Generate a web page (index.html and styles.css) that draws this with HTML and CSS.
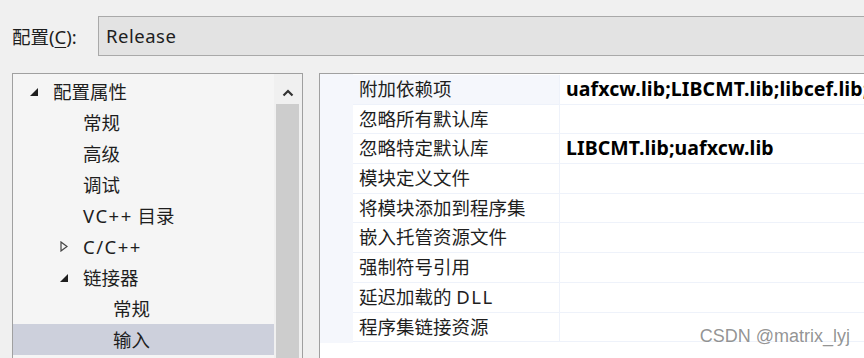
FILE: index.html
```html
<!DOCTYPE html>
<html lang="zh-CN">
<head>
<meta charset="UTF-8">
<meta name="viewport" content="width=device-width, initial-scale=1.0">
<title>属性页</title>
<link rel="stylesheet" href="styles.css">
</head>
<body>
<div class="page">
  <div class="config-bar">
    <label class="config-label">配置(<u>C</u>):</label>
    <div class="combo">Release</div>
  </div>

  <div class="main">
    <div class="tree-panel">
      <ul class="tree">
        <li class="node lvl0">
          <svg class="arrow" width="8" height="8" viewBox="0 0 8 8"><polygon points="8,0 8,8 0,8" fill="#1e1e1e"/></svg>
          配置属性
        </li>
        <li class="node lvl1">常规</li>
        <li class="node lvl1">高级</li>
        <li class="node lvl1">调试</li>
        <li class="node lvl1"><span class="latin">VC++</span> 目录</li>
        <li class="node lvl1">
          <svg class="arrow closed" width="8" height="11" viewBox="0 0 8 11"><polygon points="1,1 7,5.5 1,10" fill="none" stroke="#444" stroke-width="1.2"/></svg>
          <span class="latin">C/C++</span>
        </li>
        <li class="node lvl1">
          <svg class="arrow" width="8" height="8" viewBox="0 0 8 8"><polygon points="8,0 8,8 0,8" fill="#1e1e1e"/></svg>
          链接器
        </li>
        <li class="node lvl2">常规</li>
        <li class="node lvl2 selected">输入</li>
      </ul>
      <div class="scrollbar">
        <svg class="scroll-up" width="12" height="8" viewBox="0 0 12 8"><polyline points="1.5,6.5 6,2 10.5,6.5" fill="none" stroke="#333" stroke-width="2.2"/></svg>
        <div class="thumb"></div>
      </div>
    </div>

    <div class="grid-panel">
      <div class="gutter"></div>
      <div class="props">
        <div class="row first"><div class="name">附加依赖项</div><div class="value">uafxcw.lib;LIBCMT.lib;libcef.lib;</div></div>
        <div class="row"><div class="name">忽略所有默认库</div><div class="value"></div></div>
        <div class="row"><div class="name">忽略特定默认库</div><div class="value">LIBCMT.lib;uafxcw.lib</div></div>
        <div class="row"><div class="name">模块定义文件</div><div class="value"></div></div>
        <div class="row"><div class="name">将模块添加到程序集</div><div class="value"></div></div>
        <div class="row"><div class="name">嵌入托管资源文件</div><div class="value"></div></div>
        <div class="row"><div class="name">强制符号引用</div><div class="value"></div></div>
        <div class="row"><div class="name">延迟加载的 <span class="latin">DLL</span></div><div class="value"></div></div>
        <div class="row"><div class="name">程序集链接资源</div><div class="value"></div></div>
      </div>
    </div>
  </div>

  <div class="watermark">CSDN @matrix_lyj</div>
</div>
</body>
</html>
```

FILE: styles.css
```css
body {
  margin: 0;
  padding: 0;
  background-color: #f0f0f0;
  font-family: "Noto Sans", "Noto Sans CJK SC", sans-serif;
  font-size: 18.5px;
  color: #1e1e1e;
}

.page {
  position: relative;
  width: 864px;
  height: 358px;
  overflow: hidden;
}

.latin {
  letter-spacing: 1.5px;
}

/* top configuration combo */
.config-bar {
  display: flex;
  align-items: center;
  padding-top: 16px;
  height: 40px;
}

.config-label {
  margin-left: 12px;
  width: 86px;
  flex-shrink: 0;
}

.config-label u {
  text-decoration-thickness: 1px;
  text-underline-offset: 3px;
}

.combo {
  flex: 1;
  height: 38px;
  line-height: 38px;
  margin-right: -10px;
  padding-left: 7px;
  border: 1px solid #a9a9a9;
  background-color: #e3e3e3;
  letter-spacing: 0.5px;
}

/* panels */
.main {
  display: flex;
  margin-top: 17px;
  padding-left: 12px;
  height: 300px;
}

.tree-panel {
  display: flex;
  flex: 0 0 auto;
  width: 289px;
  border: 1px solid #a0a0a0;
  border-bottom: none;
  background-color: #f5f5f5;
}

.tree {
  list-style: none;
  margin: 0;
  padding: 2px 0 0 0;
  flex: 1;
}

.node {
  position: relative;
  height: 31px;
  line-height: 31px;
  white-space: nowrap;
}

.lvl0 { padding-left: 40px; }
.lvl1 { padding-left: 70px; }
.lvl2 { padding-left: 100px; }

.node .arrow {
  position: absolute;
  top: 12px;
  margin-left: -23px;
}

.node .arrow.closed {
  top: 10px;
}

.node.selected {
  background-color: #cdd0dc;
}

.scrollbar {
  width: 28px;
  flex-shrink: 0;
  padding: 0 3px 0 2px;
  box-sizing: border-box;
  background-color: #f0f0f0;
  display: flex;
  flex-direction: column;
  align-items: center;
}

.scroll-up {
  margin-top: 15px;
  margin-bottom: 7px;
}

.thumb {
  width: 23px;
  flex: 1;
  background-color: #cdcdcd;
}

.grid-panel {
  display: flex;
  flex: 1;
  min-width: 0;
  margin-left: 16px;
  margin-right: -10px;
  border-left: 1px solid #a0a0a0;
  border-top: 1px solid #a0a0a0;
  background-color: #ffffff;
}

.gutter {
  width: 33px;
  flex-shrink: 0;
  height: 269px;
  background-color: #f5f7fc;
}

.props {
  flex: 1;
  min-width: 0;
  padding-top: 1px;
}

.row {
  display: flex;
  height: 29.7px;
  box-sizing: border-box;
  border-bottom: 1px solid #eef2fa;
}

.name {
  width: 207px;
  flex-shrink: 0;
  padding-left: 6px;
  box-sizing: border-box;
  line-height: 28.7px;
  border-right: 1px solid #eef2fa;
  white-space: nowrap;
}

.row.first .name {
  background-color: #f5f7fc;
}

.value {
  flex: 1;
  min-width: 0;
  padding-left: 6px;
  line-height: 28.7px;
  font-size: 19.5px;
  letter-spacing: 0.1px;
  font-weight: bold;
  color: #000;
  white-space: nowrap;
  overflow: hidden;
}

.watermark {
  position: absolute;
  right: 14px;
  top: 326px;
  font-family: "Liberation Sans", sans-serif;
  font-size: 18px;
  color: rgba(120, 120, 120, 0.8);
}
```
